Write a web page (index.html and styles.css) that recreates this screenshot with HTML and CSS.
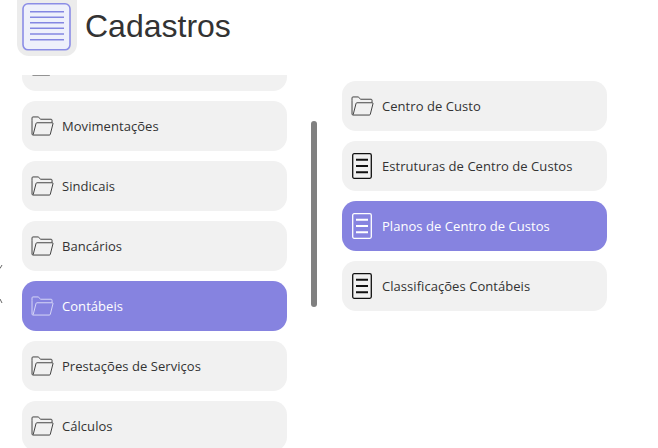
FILE: index.html
```html
<!DOCTYPE html>
<html lang="pt">
<head>
<meta charset="utf-8">
<title>Cadastros</title>
<link rel="stylesheet" href="styles.css">
</head>
<body>
<svg class="defs" width="0" height="0">
  <defs>
    <symbol id="folder" viewBox="0 0 24 21">
      <path d="M1 4.500V19a1 1 0 0 0 1 1h17.200a1 1 0 0 0 1-.8L23 8.100a.8.8 0 0 0-.8-1H6.200a1 1 0 0 0-1 .8L2.200 19.600M1 4.500V2a1 1 0 0 1 1-1h5.500l2.600 2.400H21a1 1 0 0 1 1 1v2.400" fill="none" stroke="currentColor" stroke-width="1.050" stroke-linejoin="round"/>
    </symbol>
    <symbol id="doc" viewBox="0 0 20 26">
      <rect x="0.700" y="0.700" width="18.600" height="24.600" rx="1.500" fill="none" stroke="currentColor" stroke-width="1.300"/>
      <path d="M4 6.800h12M4 13h12M4 19.200h12" stroke="currentColor" stroke-width="2"/>
    </symbol>
  </defs>
</svg>
<svg class="edge-mark" width="4" height="42" viewBox="0 0 4 42">
  <path d="M0 4.500L2 1M0 35L2 39" fill="none" stroke="#666" stroke-width="1"/>
</svg>
<header class="header">
  <div class="logo">
    <svg class="logo-svg" viewBox="0 0 50 50" width="50" height="50">
      <rect x="1" y="0.800" width="47" height="46" rx="5" fill="#eef0fb" stroke="#8b8de6" stroke-width="1.600"/>
      <path d="M8 8.700h34M8 14.300h34M8 19.700h34M8 25.300h34M8 31h34M8 36.700h34" stroke="#8486e2" stroke-width="1.400"/>
    </svg>
  </div>
  <h1 class="title">Cadastros</h1>
</header>
<main class="columns">
  <div class="col-left">
    <div class="list-clip">
      <ul class="list list-left">
        <li class="item"><svg class="ic-folder"><use href="#folder"/></svg></li>
        <li class="item"><svg class="ic-folder"><use href="#folder"/></svg><span>Movimentações</span></li>
        <li class="item"><svg class="ic-folder"><use href="#folder"/></svg><span>Sindicais</span></li>
        <li class="item"><svg class="ic-folder"><use href="#folder"/></svg><span>Bancários</span></li>
        <li class="item active"><svg class="ic-folder"><use href="#folder"/></svg><span>Contábeis</span></li>
        <li class="item"><svg class="ic-folder"><use href="#folder"/></svg><span>Prestações de Serviços</span></li>
        <li class="item"><svg class="ic-folder"><use href="#folder"/></svg><span>Cálculos</span></li>
      </ul>
    </div>
    <div class="scrollbar"></div>
  </div>
  <ul class="list list-right">
    <li class="item"><svg class="ic-folder"><use href="#folder"/></svg><span>Centro de Custo</span></li>
    <li class="item"><svg class="ic-doc"><use href="#doc"/></svg><span>Estruturas de Centro de Custos</span></li>
    <li class="item active"><svg class="ic-doc"><use href="#doc"/></svg><span>Planos de Centro de Custos</span></li>
    <li class="item"><svg class="ic-doc"><use href="#doc"/></svg><span>Classificações Contábeis</span></li>
  </ul>
</main>
</body>
</html>
```
FILE: styles.css
```css
* { box-sizing: border-box; }
html, body { margin: 0; height: 100%; overflow: hidden; background: #fff; }
body { font-family: "Open Sans", "Liberation Sans", sans-serif; color: #333; width: 658px; height: 448px; position: relative; }
.defs { position: absolute; }
.edge-mark { position: absolute; left: 0; top: 264px; }
.header { display: flex; align-items: center; gap: 8px; height: 56px; padding-left: 17px; }
.logo { width: 60px; height: 56px; background: #ececec; border-radius: 0 0 12px 12px; display: flex; align-items: center; justify-content: center; flex: none; }
.logo-svg { display: block; }
.title { margin: 0 0 5px; font: 400 32px/40px "Liberation Sans", sans-serif; color: #333; }
.columns { display: flex; padding-left: 22px; height: 392px; }
.col-left { display: flex; width: 320px; height: 392px; }
.list-clip { width: 265px; height: 373px; margin-top: 19px; overflow: hidden; }
.list { list-style: none; margin: 0; padding: 0; display: flex; flex-direction: column; gap: 10px; }
.list-left { margin-top: -34px; }
.list-right { width: 265px; padding-top: 25px; }
.item { height: 50px; background: #f1f1f1; border-radius: 14px; display: flex; align-items: center; padding-left: 9px; gap: 8px; font-size: 13px; letter-spacing: 0.05px; color: #333; flex: none; }
.item.active { background: #8683e0; color: #fff; }
.ic-folder { width: 23px; height: 20px; flex: none; color: #444; }
.ic-doc { width: 20px; height: 26px; flex: none; color: #111; margin: 0 2px 0 1px; }
.active .ic-folder { color: #d6d6f6; }
.active .ic-doc { color: #fff; }
.scrollbar { width: 6px; height: 186px; margin: 65px 0 0 24px; background: #808080; border-radius: 3px; }
```
